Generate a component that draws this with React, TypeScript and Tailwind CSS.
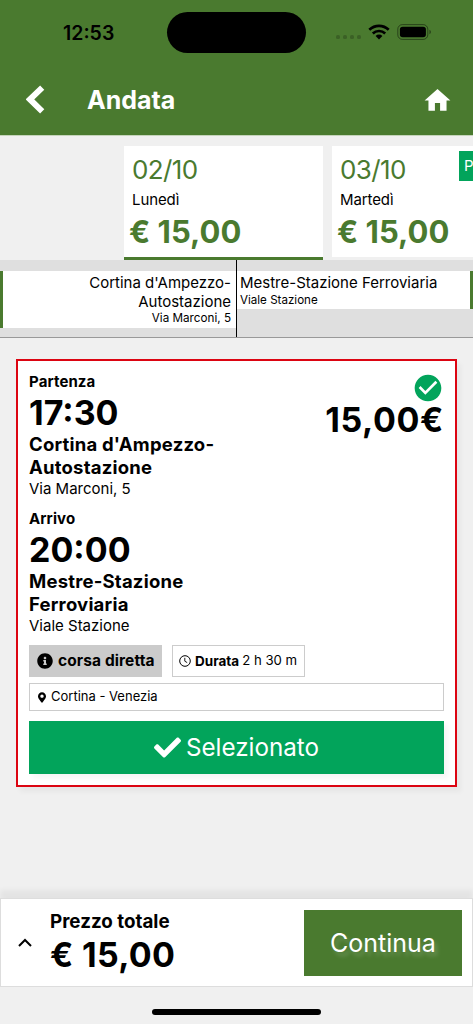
import { FaCheck, FaInfoCircle, FaMapMarkerAlt } from "react-icons/fa";
import { MdCheckCircle, MdHome } from "react-icons/md";

const days = [
  { date: "02/10", weekday: "Lunedì", price: "€ 15,00", active: true },
  { date: "03/10", weekday: "Martedì", price: "€ 15,00", active: false },
];

function StatusBar() {
  return (
    <div className="flex h-[65px] items-center">
      <span className="ml-[63px] w-[104px] text-[19.5px] leading-6 font-semibold text-black">
        12:53
      </span>
      <div className="h-[41px] w-[139px] rounded-full bg-black" />
      <div className="mt-[9px] ml-[30px] flex gap-[3px]">
        <span className="h-1 w-1 rounded-[1.5px] bg-black/20" />
        <span className="h-1 w-1 rounded-[1.5px] bg-black/20" />
        <span className="h-1 w-1 rounded-[1.5px] bg-black/20" />
        <span className="h-1 w-1 rounded-[1.5px] bg-black/20" />
      </div>
      <svg className="mb-[2px] ml-[7px] h-4 w-[22px]" viewBox="0 0 22 16">
        <path
          d="M1.3 5.8a14 14 0 0 1 19.4 0M4.8 9.5a9 9 0 0 1 12.4 0"
          fill="none"
          stroke="black"
          strokeWidth="2.7"
        />
        <path d="M11 15.4 7.6 12a4.8 4.8 0 0 1 6.8 0z" fill="black" />
      </svg>
      <svg className="mb-[1px] ml-[7px] h-4 w-[35px]" viewBox="0 0 35 16">
        <rect
          x="0.8"
          y="0.6"
          width="30"
          height="14.8"
          rx="4.6"
          fill="none"
          stroke="black"
          strokeOpacity="0.45"
        />
        <rect x="2.9" y="2.7" width="26" height="10.6" rx="2.8" fill="black" />
        <path d="M32.5 5.7v4.6a2.6 2.6 0 0 0 0-4.6z" fill="black" fillOpacity="0.5" />
      </svg>
    </div>
  );
}

function Header() {
  return (
    <header className="h-[136px] shrink-0 border-b border-[#c5d4bb] bg-[#4a7a2f]">
      <StatusBar />
      <div className="flex h-[70px] items-center text-white">
        <svg className="mt-[-2px] ml-[26px] h-[29px] w-[19px]" viewBox="0 0 19 29">
          <path d="M16.2 2.7 4 14.4l12.2 11.9" fill="none" stroke="currentColor" strokeWidth="6" />
        </svg>
        <h1 className="ml-[42px] text-[25px] leading-8 font-bold">Andata</h1>
        <MdHome className="mr-[20px] ml-auto h-[31px] w-[31px]" />
      </div>
    </header>
  );
}

function DayCard({ date, weekday, price, active }: (typeof days)[number]) {
  return (
    <div
      className={`relative w-[199px] shrink-0 border-b-[3px] bg-white bg-clip-padding pt-[8px] pl-2 ${
        active ? "border-[#4a7a2f]" : "border-transparent"
      }`}
    >
      <p className="text-[26px] leading-8 tracking-[-0.6px] text-[#4a7a2f]">{date}</p>
      <p className="mt-[4px] text-[15px] leading-5 tracking-[-0.1px] text-black">{weekday}</p>
      <p className="-ml-[3px] text-[31px] leading-[43px] font-bold text-[#4a7a2f]">{price}</p>
      {!active && (
        <span className="absolute top-[5px] left-[127px] h-[30px] w-[15px] bg-[#02a45b] pl-[5px] text-[15px] leading-[30px] text-white">
          P
        </span>
      )}
    </div>
  );
}

function RouteBar() {
  return (
    <div className="flex h-[78px] shrink-0 border-b border-[#999] bg-[#dfdfdf]">
      <div className="w-[237px] border-r border-black pt-[11px]">
        <div className="h-[57px] border-l-[3px] border-[#4a7a2f] bg-white pt-[3px] pr-[5px] text-right">
          <p className="text-[15px] leading-[18.5px]">
            Cortina d'Ampezzo-
            <br />
            Autostazione
          </p>
          <p className="text-[11.7px] leading-[14px]">Via Marconi, 5</p>
        </div>
      </div>
      <div className="flex-1 pt-[11px]">
        <div className="h-[38px] border-r-[3px] border-[#4a7a2f] bg-white pt-[3px] pl-[3px]">
          <p className="text-[15px] leading-[18.5px]">Mestre-Stazione Ferroviaria</p>
          <p className="text-[11.6px] leading-[14px]">Viale Stazione</p>
        </div>
      </div>
    </div>
  );
}

type StopProps = { label: string; time: string; lines: string[]; address: string };

function Stop({ label, time, lines, address }: StopProps) {
  return (
    <div className="h-[137px]">
      <p className="text-[15px] leading-5 font-bold tracking-[0.1px]">{label}</p>
      <p className="text-[34px] leading-[41px] font-bold">{time}</p>
      <p className="text-[18.5px] leading-[23px] font-bold tracking-[0.2px]">
        {lines[0]}
        <br />
        {lines[1]}
      </p>
      <p className="text-[15px] leading-5">{address}</p>
    </div>
  );
}

function TripCard() {
  return (
    <section className="mx-4 mt-[21px] h-[428px] shrink-0 border-2 border-[#dc0512] bg-white px-[11px] pt-[11px] text-black shadow-[4px_5px_5px_rgba(0,0,0,0.04)]">
      <div className="flex justify-between">
        <div>
          <Stop
            label="Partenza"
            time="17:30"
            lines={["Cortina d'Ampezzo-", "Autostazione"]}
            address="Via Marconi, 5"
          />
          <Stop
            label="Arrivo"
            time="20:00"
            lines={["Mestre-Stazione", "Ferroviaria"]}
            address="Viale Stazione"
          />
        </div>
        <div className="flex flex-col items-end">
          <MdCheckCircle className="h-8 w-8 text-[#02a45b]" />
          <p className="-mt-[5px] text-[34px] leading-[42px] font-bold tracking-[0.6px]">15,00€</p>
        </div>
      </div>
      <div className="-mt-[1px] flex gap-[10px]">
        <div className="flex h-8 w-[133px] items-center bg-[#cbcbcb] pl-2">
          <FaInfoCircle className="h-4 w-4" />
          <span className="ml-[5px] text-[15.5px] font-bold tracking-[0.1px]">corsa diretta</span>
        </div>
        <div className="flex h-8 w-[133px] items-center border border-[#ccc] pl-[6px]">
          <svg className="h-3 w-3" viewBox="0 0 12 12" fill="none" stroke="black">
            <circle cx="6" cy="6" r="5.3" />
            <path d="M5.8 2.8v3.4l2.4 1.4" strokeWidth="0.9" />
          </svg>
          <b className="ml-[4px] text-[13.5px] font-bold">Durata</b>
          <span className="ml-[3px] text-[13.2px]">2 h 30 m</span>
        </div>
      </div>
      <div className="mt-[6px] flex h-[28px] items-center border border-[#ccc] pl-[8px] text-[13px]">
        <FaMapMarkerAlt className="h-[11px] w-[8px]" />
        <span className="ml-[5px]">Cortina - Venezia</span>
      </div>
      <button className="mt-[10px] flex h-[53px] w-full items-center justify-center bg-[#02a45b] text-[24.2px] text-white shadow-[4px_4px_5px_rgba(0,0,0,0.04)]">
        <FaCheck className="mr-[5px] h-[27px] w-[27px]" />
        <span className="mt-[1px]">Selezionato</span>
      </button>
    </section>
  );
}

function TotalBar() {
  return (
    <footer className="mt-auto mb-[37px] flex h-[89px] shrink-0 items-center border border-[#ddd] bg-white text-black shadow-[0_-8px_5px_rgba(0,0,0,0.05)]">
      <svg className="ml-[17px] h-[9px] w-[14px]" viewBox="0 0 14 9">
        <path d="M1 8 7 2l6 6" fill="none" stroke="black" strokeWidth="2" />
      </svg>
      <div className="ml-[18px]">
        <p className="text-[18.8px] leading-6 font-bold">Prezzo totale</p>
        <p className="text-[34px] leading-[42px] font-bold tracking-[0.3px]">€ 15,00</p>
      </div>
      <button className="mr-[10px] ml-auto h-[66px] w-[158px] bg-[#4a7a2f] pt-[2px] text-[25px] text-white text-shadow-[3px_4px_4px_rgba(255,255,255,0.2)]">
        Continua
      </button>
    </footer>
  );
}

export default function App() {
  return (
    <div className="relative flex h-[1024px] w-[473px] flex-col overflow-hidden bg-[#f0f0f0] font-['Inter',sans-serif]">
      <Header />
      <div className="flex h-[124px] shrink-0 gap-[9px] overflow-hidden pt-[10px] pl-[124px]">
        {days.map((day) => (
          <DayCard key={day.date} {...day} />
        ))}
      </div>
      <RouteBar />
      <TripCard />
      <TotalBar />
      <div className="absolute bottom-[9px] left-[152px] h-[6px] w-[169px] rounded-full bg-black" />
    </div>
  );
}
